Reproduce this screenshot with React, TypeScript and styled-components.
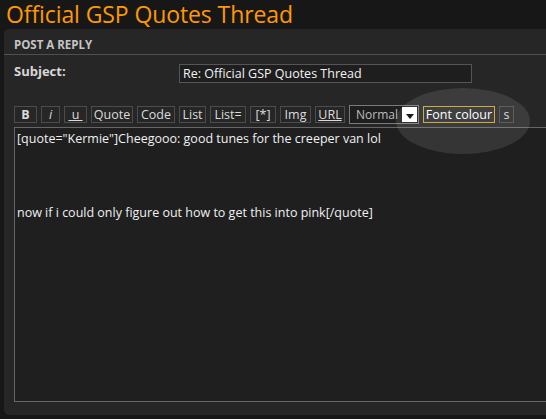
import React from "react";
import styled, { createGlobalStyle } from "styled-components";

const Global = createGlobalStyle`
  html, body { margin: 0; padding: 0; background: #171717; overflow: hidden; }
  body { width: 546px; height: 419px; }
`;

const Page = styled.div`
  width: 546px;
  height: 419px;
  background: #171717;
  display: flex;
  flex-direction: column;
  overflow: hidden;
  font-family: "Open Sans", "DejaVu Sans", sans-serif;
`;

const Title = styled.h1`
  margin: 0;
  height: 29px;
  padding: 0 0 0 6px;
  font-family: "Open Sans", sans-serif;
  font-weight: 400;
  font-size: 23px;
  line-height: 29px;
  color: #ff9900;
  letter-spacing: -0.1px;
  white-space: nowrap;
  flex-shrink: 0;
`;

const Panel = styled.section`
  margin-left: 4px;
  width: 560px;
  height: 386px;
  background: #262626;
  border-radius: 5px 0 0 5px;
  display: flex;
  flex-direction: column;
  position: relative;
`;

const PanelHead = styled.h2`
  margin: 0;
  height: 25px;
  padding: 0 0 0 10px;
  border-bottom: 1px solid #505050;
  font-size: 11.5px;
  font-weight: 700;
  line-height: 31px;
  color: #c4c4c4;
  box-sizing: content-box;
`;

const SubjectRow = styled.div`
  display: flex;
  align-items: flex-start;
  padding: 9px 0 0 10px;
  height: 19px;
`;

const Label = styled.label`
  width: 165px;
  font-size: 13px;
  font-weight: 700;
  color: #d8d8d8;
  line-height: 15px;
`;

const SubjectInput = styled.div`
  width: 288px;
  height: 17px;
  border: 1px solid #555;
  background: #1e1e1e;
  color: #f2f2f2;
  font-size: 12.5px;
  line-height: 17px;
  padding: 0 0 0 3px;
`;

const Toolbar = styled.div`
  display: flex;
  gap: 4px;
  padding: 23px 0 0 10px;
  height: 17px;
`;

const Btn = styled.button<{ $w: number; $b?: boolean; $i?: boolean; $u?: boolean; $hl?: boolean }>`
  width: ${(p) => p.$w}px;
  height: 17px;
  box-sizing: border-box;
  padding: 0;
  margin: 0;
  border: 1px solid ${(p) => (p.$hl ? "#c9a135" : "#4c4c4c")};
  background: ${(p) => (p.$hl ? "#2b2b2b" : "#262626")};
  color: ${(p) => (p.$hl ? "#ffffff" : "#dcdcdc")};
  font-family: "Open Sans", sans-serif;
  font-size: 12.5px;
  line-height: 14px;
  font-weight: ${(p) => (p.$b ? 700 : 400)};
  font-style: ${(p) => (p.$i ? "italic" : "normal")};
  text-decoration: ${(p) => (p.$u ? "underline" : "none")};
  white-space: nowrap;
  position: relative;
  z-index: 2;
`;

const Select = styled.div`
  width: 70px;
  height: 19px;
  margin-top: -1px;
  box-sizing: border-box;
  border: 1px solid #7a7a7a;
  background: #1e1e1e;
  display: flex;
  align-items: center;
  justify-content: space-between;
  padding: 0 1px 0 6px;
  color: #bdbdbd;
  font-size: 12px;
  position: relative;
  z-index: 2;
`;

const Arrow = styled.span`
  width: 15px;
  height: 15px;
  background: #ffffff;
  display: flex;
  align-items: center;
  justify-content: center;
  padding-top: 3px;
  box-sizing: border-box;
`;

const Editor = styled.div`
  margin: 4px 0 0 10px;
  width: 560px;
  height: 275px;
  box-sizing: border-box;
  border: 1px solid #666;
  background: #1f1f1f;
  color: #f0f0f0;
  font-size: 12.5px;
  line-height: 14.8px;
  padding: 4px 0 0 2px;
  white-space: pre-wrap;
  position: relative;
  z-index: 1;
`;

const Spot = styled.div`
  position: absolute;
  left: 392px;
  top: 59px;
  width: 134px;
  height: 66px;
  border-radius: 50%;
  background: rgba(255, 255, 255, 0.1);
  z-index: 3;
  pointer-events: none;
`;

const text =
  '[quote="Kermie"]Cheegooo: good tunes for the creeper van lol\n\n\n\n\nnow if i could only figure out how to get this into pink[/quote]';

export default function App() {
  return (
    <Page>
      <Global />
      <Title>Official GSP Quotes Thread</Title>
      <Panel>
        <PanelHead>POST A REPLY</PanelHead>
        <SubjectRow>
          <Label>Subject:</Label>
          <SubjectInput>Re: Official GSP Quotes Thread</SubjectInput>
        </SubjectRow>
        <Toolbar>
          <Btn $w={23} $b>B</Btn>
          <Btn $w={19} $i>i</Btn>
          <Btn $w={23} $u>&nbsp;u&nbsp;</Btn>
          <Btn $w={42}>Quote</Btn>
          <Btn $w={38}>Code</Btn>
          <Btn $w={27}>List</Btn>
          <Btn $w={36}>List=</Btn>
          <Btn $w={26}>[*]</Btn>
          <Btn $w={31}>Img</Btn>
          <Btn $w={30} $u>URL</Btn>
          <Select>
            Normal
            <Arrow>
              <svg width="8" height="5" viewBox="0 0 8 5">
                <path d="M0 0 L8 0 L4 5 Z" fill="#000" />
              </svg>
            </Arrow>
          </Select>
          <Btn $w={72} $hl>Font colour</Btn>
          <Btn $w={15}>s</Btn>
        </Toolbar>
        <Editor>{text}</Editor>
        <Spot />
      </Panel>
    </Page>
  );
}
